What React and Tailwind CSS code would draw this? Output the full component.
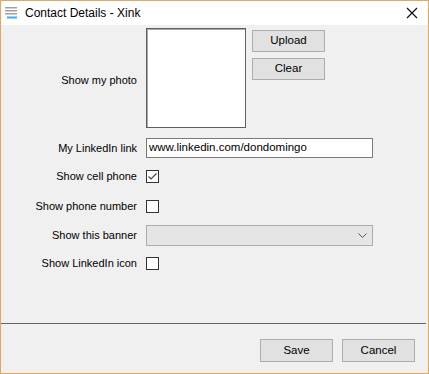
import React from 'react';

const Label = ({ children }) => (
  <div className="w-[145px] shrink-0 pr-[9px] text-right">{children}</div>
);

const Checkbox = ({ checked }) => (
  <div className="w-[13px] h-[13px] border border-[#333333] bg-white flex items-center justify-center">
    {checked && (
      <svg width="11" height="11" viewBox="0 0 11 11">
        <polyline points="1.5,5.5 4,8 9.5,2.5" fill="none" stroke="#444444" strokeWidth="1.1" />
      </svg>
    )}
  </div>
);

const WinButton = ({ children, className = '' }) => (
  <button className={`h-[22px] border border-[#adadad] bg-[#e1e1e1] text-black text-[11.5px] leading-none ${className}`}>
    {children}
  </button>
);

export default function App() {
  return (
    <div
      className="w-[429px] h-[374px] border border-[#e5a75f] bg-[#f0f0f0] flex flex-col text-[11px] text-black overflow-hidden"
      style={{ fontFamily: '"Liberation Sans", Arial, sans-serif' }}
    >
      {/* title bar */}
      <div className="h-[24px] bg-white flex items-center shrink-0">
        <svg className="ml-[4px]" width="13" height="12" viewBox="0 0 13 12">
          <rect x="0" y="0" width="12" height="1.5" fill="#a0a0a0" />
          <rect x="0" y="3" width="12" height="1.5" fill="#a0a0a0" />
          <rect x="0" y="6" width="12" height="1.5" fill="#a0a0a0" />
          <rect x="2" y="9.5" width="10" height="2" fill="#3fa9f5" />
        </svg>
        <span className="ml-[7px] text-[12px]">Contact Details - Xink</span>
        <svg className="ml-auto mr-[10px]" width="12" height="12" viewBox="0 0 12 12">
          <path d="M1 1 L11 11 M11 1 L1 11" stroke="#111" strokeWidth="1.2" />
        </svg>
      </div>

      {/* form */}
      <div className="flex flex-col pt-[3px]">
        <div className="flex items-center h-[100px]">
          <div className="w-[145px] shrink-0 pr-[9px] text-right mt-[4px]">Show my photo</div>
          <div className="w-[100px] h-[100px] border border-[#5f5f5f] bg-white shadow-[inset_1px_1px_0_#a8a8a8]" />
          <div className="self-start flex flex-col gap-[6px] ml-[6px] mt-[2px]">
            <WinButton className="w-[73px]">Upload</WinButton>
            <WinButton className="w-[73px]">Clear</WinButton>
          </div>
        </div>

        <div className="flex items-center mt-[10px] h-[20px]">
          <Label>My LinkedIn link</Label>
          <div className="w-[227px] h-[20px] border border-[#7a7a7a] bg-white flex items-center px-[2px] text-[11.5px]">
            www.linkedin.com/dondomingo
          </div>
        </div>

        <div className="flex items-center mt-[9px] h-[19px]">
          <Label>Show cell phone</Label>
          <Checkbox checked />
        </div>

        <div className="flex items-center mt-[11px] h-[19px]">
          <Label>Show phone number</Label>
          <Checkbox />
        </div>

        <div className="flex items-center mt-[9px] h-[21px]">
          <Label>Show this banner</Label>
          <div className="w-[227px] h-[21px] border border-[#adadad] bg-[#e5e5e5] flex items-center justify-end pr-[5px]">
            <svg width="9" height="6" viewBox="0 0 9 6">
              <polyline points="0.5,0.5 4.5,4.5 8.5,0.5" fill="none" stroke="#555" strokeWidth="1" />
            </svg>
          </div>
        </div>

        <div className="flex items-center mt-[8px] h-[19px]">
          <Label>Show LinkedIn icon</Label>
          <Checkbox />
        </div>
      </div>

      <div className="mt-auto">
        <div className="h-px bg-[#646464] mr-[2px]" />
        <div className="flex justify-end gap-[9px] pt-[15px] pb-[11px] pr-[13px]">
          <WinButton className="w-[73px] h-[23px]">Save</WinButton>
          <WinButton className="w-[73px] h-[23px]">Cancel</WinButton>
        </div>
      </div>
    </div>
  );
}
